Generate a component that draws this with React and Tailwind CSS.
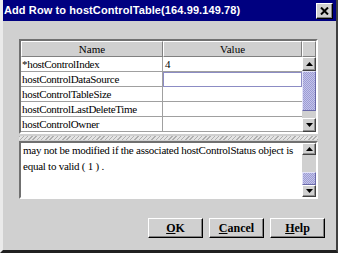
import React from "react";

const serif = { fontFamily: '"Liberation Serif", "Times New Roman", serif' };

function Arrow({ dir }) {
  return (
    <svg width="7" height="4" viewBox="0 0 7 4" className="block">
      {dir === "up" ? (
        <polygon points="3.5,0 7,4 0,4" fill="#000" />
      ) : (
        <polygon points="0,0 7,0 3.5,4" fill="#000" />
      )}
    </svg>
  );
}

function ScrollBtn({ dir, h = "h-[14px]" }) {
  return (
    <div
      className={`${h} w-full shrink-0 bg-[#d0d0d0] border border-t-white border-l-white border-r-[#404040] border-b-[#404040] shadow-[inset_-1px_-1px_0_#909090] flex items-center justify-center`}
    >
      <Arrow dir={dir} />
    </div>
  );
}

function Thumb({ h }) {
  return (
    <div
      className={`${h} w-full shrink-0 border border-t-[#e4e4f8] border-l-[#e4e4f8] border-r-[#6868a8] border-b-[#6868a8] bg-[repeating-conic-gradient(#9c9cd4_0%_25%,#c4c4ea_0%_50%)] bg-[length:2px_2px]`}
    />
  );
}

const rows = [
  ["*hostControlIndex", "4"],
  ["hostControlDataSource", ""],
  ["hostControlTableSize", ""],
  ["hostControlLastDeleteTime", ""],
  ["hostControlOwner", ""],
];

export default function App() {
  return (
    <div className="w-[338px] h-[253px] overflow-hidden bg-[#d0d0d0] flex flex-col border-l-[3px] border-l-[#eaeaea] border-r-2 border-r-[#404040] border-b-[3px] border-b-[#202020]">
      {/* Title bar */}
      <div className="h-[21px] shrink-0 bg-[#000080] flex items-center justify-between pr-[3px]">
        <span
          className="text-white text-[11px] font-bold leading-none pl-[1px] whitespace-nowrap tracking-[0.1px]"
          style={{ fontFamily: '"Liberation Sans", Arial, sans-serif' }}
        >
          Add Row to hostControlTable(164.99.149.78)
        </span>
        <div className="w-[17px] h-[16px] bg-[#d0d0d0] border border-t-white border-l-white border-r-black border-b-black shadow-[inset_-1px_-1px_0_#808080] flex items-center justify-center">
          <svg width="9" height="8" viewBox="0 0 9 8">
            <path d="M1 0.5 L8 7.5 M8 0.5 L1 7.5" stroke="#000" strokeWidth="2" />
          </svg>
        </div>
      </div>

      {/* Body */}
      <div className="flex flex-col pl-[16px] pt-[18px]">
        {/* Table */}
        <div className="w-[299px] h-[95px] border-2 border-t-[#707070] border-l-[#707070] border-r-white border-b-white flex bg-white">
          <div className="w-[281px] flex flex-col" style={serif}>
            <div className="h-[16px] flex shrink-0">
              <div className="w-[142px] bg-[#d0d0d0] border border-t-white border-l-white border-r-[#808080] border-b-[#808080] flex items-center justify-center text-[11px] leading-none text-black">
                Name
              </div>
              <div className="w-[139px] bg-[#d0d0d0] border border-t-white border-l-white border-r-[#808080] border-b-[#808080] flex items-center justify-center text-[11px] leading-none text-black">
                Value
              </div>
            </div>
            {rows.map(([n, v], i) => (
              <div key={n} className="h-[15px] flex shrink-0 text-[11px] leading-none text-black">
                <div className="w-[142px] border-r border-b border-[#a0a0a0] flex items-center pl-[1px] whitespace-nowrap tracking-[-0.3px]">
                  {n}
                </div>
                <div
                  className={`w-[139px] flex items-center pl-[2px] ${
                    i === 1 ? "border border-[#8c8cc4]" : "border-b border-[#a0a0a0]"
                  }`}
                >
                  {v}
                </div>
              </div>
            ))}
          </div>
          <div className="w-[14px] flex flex-col bg-[#d0d0d0]">
            <div className="h-[16px] shrink-0 border border-t-white border-l-white border-r-[#808080] border-b-[#808080]" />
            <ScrollBtn dir="up" />
            <Thumb h="h-[40px]" />
            <div className="flex-1 bg-[#d0d0d0]" />
            <ScrollBtn dir="down" />
          </div>
        </div>

        {/* Splitter */}
        <div className="w-[299px] h-[7px] flex items-center">
          <div className="w-full h-[4px] bg-[repeating-linear-gradient(135deg,#b0b0b0_0px,#b0b0b0_1px,#e4e4e4_1px,#e4e4e4_3px)]" />
        </div>

        {/* Text area */}
        <div className="w-[299px] h-[58px] border-2 border-t-[#707070] border-l-[#707070] border-r-white border-b-white flex bg-white">
          <div
            className="w-[281px] pl-[2px] -mt-px text-[11px] leading-[16px] text-black whitespace-nowrap tracking-[-0.25px]"
            style={serif}
          >
            <div>may not be modified if the associated hostControlStatus object is</div>
            <div>equal to valid ( 1 ) .</div>
          </div>
          <div className="w-[14px] flex flex-col bg-[#d0d0d0]">
            <ScrollBtn dir="up" h="h-[12px]" />
            <div className="h-[17px] shrink-0" />
            <Thumb h="h-[13px]" />
            <div className="flex-1" />
            <ScrollBtn dir="down" h="h-[12px]" />
          </div>
        </div>

        {/* Buttons */}
        <div className="flex gap-[6px] pl-[129px] pt-[19px]" style={serif}>
          {[
            ["O", "K"],
            ["C", "ancel"],
            ["H", "elp"],
          ].map(([u, rest]) => (
            <div
              key={u}
              className="w-[55px] h-[20px] border border-t-white border-l-white border-r-black border-b-black shadow-[inset_-1px_-1px_0_#808080] flex items-center justify-center text-[12px] font-bold text-black leading-none"
            >
              <span>
                <span className="underline">{u}</span>
                {rest}
              </span>
            </div>
          ))}
        </div>
      </div>
    </div>
  );
}
